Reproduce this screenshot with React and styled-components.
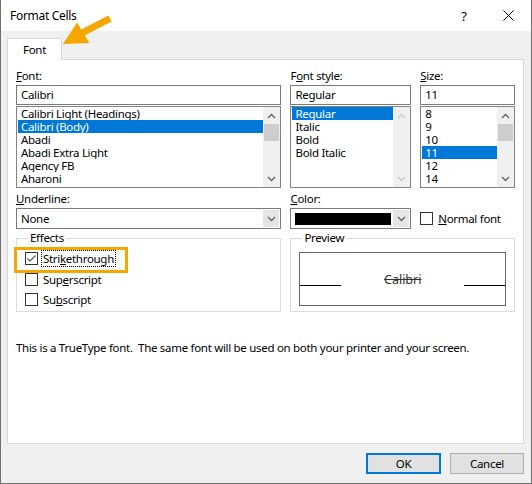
import React from 'react';
import styled, { createGlobalStyle } from 'styled-components';

const GlobalStyle = createGlobalStyle`
  *, *::before, *::after { box-sizing: border-box; }
  html, body { margin: 0; padding: 0; background: #ffffff; }
  body {
    font-family: "Noto Sans", "Liberation Sans", sans-serif;
    font-size: 11.5px;
    letter-spacing: -0.3px;
    color: #000000;
  }
`;

const fontRows = ['Calibri Light (Headings)', 'Calibri (Body)', 'Abadi', 'Abadi Extra Light', 'Agency FB', 'Aharoni'];
const styleRows = ['Regular', 'Italic', 'Bold', 'Bold Italic'];
const sizeRows = ['8', '9', '10', '11', '12', '14'];

function Chevron({ up, color = '#606060' }) {
  return (
    <svg width="9" height="6" viewBox="0 0 9 6">
      <path
        d={up ? 'M1 5 L4.5 1.5 L8 5' : 'M1 1 L4.5 4.5 L8 1'}
        fill="none"
        stroke={color}
        strokeWidth="1.3"
      />
    </svg>
  );
}

function ScrollBar({ disabled }) {
  const c = disabled ? '#c8c8c8' : '#606060';
  return (
    <Track>
      <ArrowBox><Chevron up color={c} /></ArrowBox>
      {!disabled && <Thumb />}
      <Spacer />
      <ArrowBox><Chevron color={c} /></ArrowBox>
    </Track>
  );
}

function List({ rows, selected, disabled }) {
  return (
    <ListBox>
      <Items>
        {rows.map((r) => (
          <Item key={r} $selected={r === selected}>{r}</Item>
        ))}
      </Items>
      <ScrollBar disabled={disabled} />
    </ListBox>
  );
}

function Check({ checked }) {
  return (
    <Box>
      {checked && (
        <svg width="11" height="11" viewBox="0 0 11 11">
          <path d="M1.5 5.5 L4 8 L9.5 2.5" fill="none" stroke="#555" strokeWidth="1.2" />
        </svg>
      )}
    </Box>
  );
}

export default function App() {
  return (
    <>
      <GlobalStyle />
      <Window>
        <TitleBar>
          <Title>Format Cells</Title>
          <TitleButton $q>?</TitleButton>
          <TitleButton>
            <svg width="11" height="11" viewBox="0 0 11 11">
              <path d="M0.5 0.5 L10.5 10.5 M10.5 0.5 L0.5 10.5" stroke="#000" strokeWidth="1" />
            </svg>
          </TitleButton>
        </TitleBar>

        <TabStrip>
          <Tab>Font</Tab>
        </TabStrip>

        <Panel>
          <Row>
            <Field $w={266}>
              <Label><Key>F</Key>ont:</Label>
              <TextBox>Calibri</TextBox>
              <List rows={fontRows} selected="Calibri (Body)" />
            </Field>
            <Field $w={121}>
              <Label>F<Key>o</Key>nt style:</Label>
              <TextBox>Regular</TextBox>
              <List rows={styleRows} selected="Regular" disabled />
            </Field>
            <Field $w={95}>
              <Label><Key>S</Key>ize:</Label>
              <TextBox>11</TextBox>
              <List rows={sizeRows} selected="11" />
            </Field>
          </Row>

          <Row $mt={3}>
            <Field $w={266}>
              <Label><Key>U</Key>nderline:</Label>
              <Select>
                <SelectText>None</SelectText>
                <DropButton><Chevron /></DropButton>
              </Select>
            </Field>
            <Field $w={121}>
              <Label><Key>C</Key>olor:</Label>
              <Select>
                <Swatch />
                <DropButton><Chevron /></DropButton>
              </Select>
            </Field>
            <Field $w={95}>
              <Label />
              <CheckRow $h={21}>
                <Check />
                <CheckLabel><Key>N</Key>ormal font</CheckLabel>
              </CheckRow>
            </Field>
          </Row>

          <Row $mt={1}>
            <Group $w={266}>
              <Legend>Effects</Legend>
              <CheckRow $h={21} $highlight>
                <Check checked />
                <CheckLabel $focus>Stri<Key>k</Key>ethrough</CheckLabel>
              </CheckRow>
              <CheckRow>
                <Check />
                <CheckLabel>Sup<Key>e</Key>rscript</CheckLabel>
              </CheckRow>
              <CheckRow>
                <Check />
                <CheckLabel>Su<Key>b</Key>script</CheckLabel>
              </CheckRow>
            </Group>
            <Group $w={225} $preview>
              <Legend>Preview</Legend>
              <PreviewBox>
                <BaseLine />
                <PreviewText>Calibri</PreviewText>
                <BaseLine />
              </PreviewBox>
            </Group>
          </Row>

          <Note>This is a TrueType font.&nbsp; The same font will be used on both your printer and your screen.</Note>
        </Panel>

        <Footer>
          <Button $default>OK</Button>
          <Button>Cancel</Button>
        </Footer>

        <Pointer width="120" height="50" viewBox="0 0 120 50">
          <line x1="109" y1="18.5" x2="80" y2="33.5" stroke="#f5a700" strokeWidth="7" />
          <polygon points="62,44 76,22.5 88.5,43" fill="#f5a700" />
        </Pointer>
      </Window>
    </>
  );
}

const Window = styled.div`
  position: relative;
  width: 532px;
  height: 484px;
  background: #f0f0f0;
  border: 1px solid #707070;
  border-top: none;
  display: flex;
  flex-direction: column;
  overflow: hidden;
`;

const TitleBar = styled.div`
  height: 31px;
  background: #ffffff;
  display: flex;
  align-items: center;
  padding-left: 9px;
  flex-shrink: 0;
`;

const Title = styled.div`
  flex: 1;
  font-size: 12px;
`;

const TitleButton = styled.div`
  width: 44px;
  height: 31px;
  display: flex;
  align-items: center;
  justify-content: center;
  font-size: ${({ $q }) => ($q ? '13px' : '12px')};
  margin-right: ${({ $q }) => ($q ? '0' : '1px')};
`;

const TabStrip = styled.div`
  display: flex;
  padding: 7px 0 0 6px;
`;

const Tab = styled.div`
  position: relative;
  z-index: 1;
  width: 55px;
  height: 22px;
  margin-bottom: -1px;
  background: #ffffff;
  border: 1px solid #d9d9d9;
  border-bottom: none;
  display: flex;
  align-items: center;
  justify-content: center;
`;

const Panel = styled.div`
  margin-left: 6px;
  width: 517px;
  height: 385px;
  flex-shrink: 0;
  background: #ffffff;
  border: 1px solid #d9d9d9;
  padding: 8px 8px 0 8px;
`;

const Row = styled.div`
  display: flex;
  gap: 9px;
  margin-top: ${({ $mt }) => $mt || 0}px;
`;

const Field = styled.div`
  width: ${({ $w }) => $w}px;
  display: flex;
  flex-direction: column;
`;

const Label = styled.div`
  height: 17px;
  line-height: 16px;
  white-space: nowrap;
`;

const Key = styled.span`
  text-decoration: underline;
  text-underline-offset: 1px;
`;

const TextBox = styled.div`
  height: 20px;
  border: 1px solid #7a7a7a;
  padding-left: 4px;
  line-height: 18px;
`;

const ListBox = styled.div`
  margin-top: 1px;
  height: 82px;
  border: 1px solid #828282;
  padding-left: 1px;
  display: flex;
`;

const Items = styled.div`
  flex: 1;
  min-width: 0;
`;

const Item = styled.div`
  height: 13px;
  line-height: 13px;
  padding-left: 3px;
  white-space: nowrap;
  overflow: hidden;
  background: ${({ $selected }) => ($selected ? '#0078d7' : 'transparent')};
  color: ${({ $selected }) => ($selected ? '#ffffff' : '#000000')};
`;

const Track = styled.div`
  width: 17px;
  background: #f0f0f0;
  display: flex;
  flex-direction: column;
`;

const ArrowBox = styled.div`
  height: 17px;
  display: flex;
  align-items: center;
  justify-content: center;
`;

const Thumb = styled.div`
  height: 17px;
  margin: 0 1px;
  background: #cdcdcd;
`;

const Spacer = styled.div`
  flex: 1;
`;

const Select = styled.div`
  height: 21px;
  border: 1px solid #7a7a7a;
  display: flex;
  align-items: center;
  padding: 1px;
`;

const SelectText = styled.div`
  flex: 1;
  padding-left: 3px;
`;

const Swatch = styled.div`
  flex: 1;
  height: 12px;
  margin: 0 2px 0 3px;
  background: #000000;
`;

const DropButton = styled.div`
  width: 16px;
  align-self: stretch;
  background: #e5e5e5;
  display: flex;
  align-items: center;
  justify-content: center;
`;

const CheckRow = styled.div`
  position: relative;
  height: ${({ $h }) => $h || 20}px;
  display: flex;
  align-items: center;
  gap: 3px;

  ${({ $highlight }) =>
    $highlight &&
    `
    &::after {
      content: '';
      position: absolute;
      left: -11px;
      top: -1px;
      width: 114px;
      height: 26px;
      border: 3px solid #f5a700;
      pointer-events: none;
    }
  `}
`;

const Box = styled.div`
  width: 13px;
  height: 13px;
  border: 1px solid #333333;
  background: #ffffff;
  display: flex;
  align-items: center;
  justify-content: center;
  flex-shrink: 0;
`;

const CheckLabel = styled.span`
  padding: 0 1px;
  line-height: 15px;
  border: 1px dotted ${({ $focus }) => ($focus ? '#000000' : 'transparent')};
  white-space: nowrap;
`;

const Group = styled.fieldset`
  width: ${({ $w }) => $w}px;
  margin: 0;
  height: 82px;
  border: 1px solid #dcdcdc;
  padding: ${({ $preview }) => ($preview ? '6px 8px 0 8px' : '2px 8px 0 8px')};
  display: flex;
  flex-direction: column;
`;

const Legend = styled.legend`
  margin-left: 3px;
  padding: 0 2px;
  line-height: 16px;
`;

const PreviewBox = styled.div`
  height: 54px;
  border: 1px solid #646464;
  display: flex;
  align-items: center;
`;

const BaseLine = styled.div`
  width: 41px;
  height: 1px;
  margin-top: 13px;
  background: #000000;
`;

const PreviewText = styled.div`
  flex: 1;
  text-align: center;
  font-size: 12.5px;
  letter-spacing: 0;
  color: #333333;
  text-decoration: line-through;
`;

const Note = styled.div`
  margin-top: 28px;
  line-height: 16px;
  white-space: nowrap;
`;

const Footer = styled.div`
  display: flex;
  justify-content: flex-end;
  gap: 9px;
  padding: 9px 7px 0 0;
`;

const Button = styled.div`
  width: ${({ $default }) => ($default ? 75 : 74)}px;
  height: 21px;
  background: #e1e1e1;
  border: ${({ $default }) => ($default ? '2px solid #0078d7' : '1px solid #adadad')};
  display: flex;
  align-items: center;
  justify-content: center;
`;

const Pointer = styled.svg`
  position: absolute;
  left: 0;
  top: 0;
  pointer-events: none;
`;
